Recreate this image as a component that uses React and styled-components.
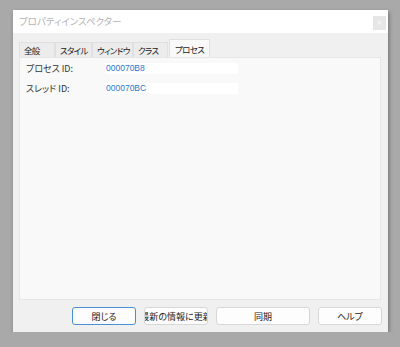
import React from 'react'
import styled, { createGlobalStyle } from 'styled-components'

const GlobalStyle = createGlobalStyle`
    html, body {
        margin: 0;
        background: #a9a9a9;
        font-family: "Noto Sans CJK JP", "Noto Sans", sans-serif;
        font-feature-settings: "palt";
    }
`

const Window = styled.div`
    display: flex;
    flex-direction: column;
    width: 375px;
    height: 322px;
    margin: 10px 0 0 13px;
    background: #f0f0f0;
    box-shadow: 1px 2px 4px rgba(0, 0, 0, 0.35);
`

const TitleBar = styled.div`
    display: flex;
    justify-content: space-between;
    align-items: flex-start;
    height: 23px;
    padding: 0 2px 0 6px;
    background: #ffffff;
`

const Title = styled.span`
    margin-top: 5px;
    font-size: 9.5px;
    color: #b4b4b4;
    line-height: 13px;
`

const CloseButton = styled.div`
    display: flex;
    align-items: center;
    justify-content: center;
    width: 13px;
    height: 14px;
    margin-top: 6px;
    background: #e6e6e6;
    color: #f7f7f7;
    font-family: "DejaVu Sans", sans-serif;
    font-size: 7px;
    font-weight: bold;
`

const Body = styled.div`
    flex: 1;
    display: flex;
    flex-direction: column;
    padding: 6px 7px 7px 6px;
    min-height: 0;
`

const TabBar = styled.div`
    display: flex;
    align-items: flex-end;
    height: 18px;
`

const Tab = styled.div`
    box-sizing: border-box;
    width: ${({ w }) => w}px;
    height: ${({ active }) => (active ? 18 : 15)}px;
    margin-left: ${({ active }) => (active ? 1 : 0)}px;
    padding: ${({ active }) => (active ? '3px' : '1px')} 0 0 ${({ active }) => (active ? 5 : 4)}px;
    border: 1px solid #e0e0e0;
    border-bottom: none;
    background: ${({ active }) => (active ? '#f9f9f9' : '#ececec')};
    font-size: 8.5px;
    line-height: 12px;
    letter-spacing: -0.7px;
    color: #222;
    white-space: nowrap;
`

const Panel = styled.div`
    flex: 1;
    display: grid;
    grid-template-columns: 79px 133px;
    grid-auto-rows: 11px;
    row-gap: 9px;
    align-content: start;
    padding: 5px 0 0 6px;
    background: #f9f9f9;
    border: 1px solid #e6e6e6;
`

const Label = styled.span`
    font-size: 9px;
    line-height: 11px;
    color: #333;
`

const Value = styled.span`
    padding-left: 1px;
    background: #ffffff;
    font-family: "Liberation Sans", sans-serif;
    font-size: 8.5px;
    line-height: 11px;
    color: #2a78d2;
`

const ButtonRow = styled.div`
    display: flex;
    justify-content: flex-end;
    gap: 8px;
    margin: 7px -1px 0 0;
`

const Button = styled.div`
    box-sizing: border-box;
    display: flex;
    align-items: center;
    justify-content: center;
    width: ${({ w }) => w}px;
    height: 18px;
    overflow: hidden;
    white-space: nowrap;
    background: #fdfdfd;
    border: 1px solid ${({ focused }) => (focused ? '#4b8fd5' : '#d8d8d8')};
    border-radius: 3px;
    font-size: 9px;
    color: #222;
`

const tabs = [
    { label: '全般', w: 36 },
    { label: 'スタイル', w: 37 },
    { label: 'ウィンドウ', w: 41 },
    { label: 'クラス', w: 35 },
    { label: 'プロセス', w: 41, active: true },
]

const rows = [
    { label: 'プロセス ID:', value: '000070B8' },
    { label: 'スレッド ID:', value: '000070BC' },
]

const buttons = [
    { label: '閉じる', w: 64, focused: true },
    { label: '最新の情報に更新', w: 64 },
    { label: '同期', w: 94 },
    { label: 'ヘルプ', w: 64 },
]

const App = () => (
    <>
        <GlobalStyle />
        <Window>
            <TitleBar>
                <Title>プロパティインスペクター</Title>
                <CloseButton>✕</CloseButton>
            </TitleBar>
            <Body>
                <TabBar>
                    {tabs.map(tab => (
                        <Tab key={tab.label} w={tab.w} active={tab.active}>
                            {tab.label}
                        </Tab>
                    ))}
                </TabBar>
                <Panel>
                    {rows.map(row => (
                        <React.Fragment key={row.label}>
                            <Label>{row.label}</Label>
                            <Value>{row.value}</Value>
                        </React.Fragment>
                    ))}
                </Panel>
                <ButtonRow>
                    {buttons.map(b => (
                        <Button key={b.label} w={b.w} focused={b.focused}>
                            {b.label}
                        </Button>
                    ))}
                </ButtonRow>
            </Body>
        </Window>
    </>
)

export default App
